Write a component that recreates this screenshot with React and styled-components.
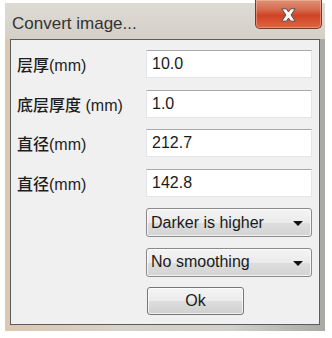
import React from 'react'
import styled, { createGlobalStyle } from 'styled-components'

const GlobalStyle = createGlobalStyle`
  html, body { margin: 0; padding: 0; background: #fff; }
  body { width: 332px; height: 338px; overflow: hidden; }
`

const fields = [
  { label: '层厚', gap: '', value: '10.0' },
  { label: '底层厚度', gap: ' ', value: '1.0' },
  { label: '直径', gap: '', value: '212.7' },
  { label: '直径', gap: '', value: '142.8' },
]

const selects = ['Darker is higher', 'No smoothing']

const App = () => {
  return (
    <>
      <GlobalStyle />
      <Window>
        <TitleBar>
          <Title>Convert image...</Title>
          <CloseButton>
            <svg width="15" height="14" viewBox="0 0 15 14">
              <path
                d="M0.8 0.8h4.6l2.1 3.1 2.1-3.1h4.6l-4.1 6.2 4.1 6.2H9.6L7.5 10.1 5.4 13.2H0.8l4.1-6.2z"
                fill="#f6f6f6"
                stroke="#5d4c48"
                strokeWidth="1"
                strokeLinejoin="round"
              />
            </svg>
          </CloseButton>
        </TitleBar>
        <Panel>
          {fields.map((f, i) => (
            <Row key={i}>
              <Label>
                <Cjk>{f.label}</Cjk>
                {f.gap}(mm)
              </Label>
              <TextBox>{f.value}</TextBox>
            </Row>
          ))}
          {selects.map((s) => (
            <Row key={s}>
              <span />
              <Combo>
                {s}
                <Arrow />
              </Combo>
            </Row>
          ))}
          <Row>
            <span />
            <OkButton>Ok</OkButton>
          </Row>
        </Panel>
      </Window>
    </>
  )
}

export default App

const Window = styled.div`
  margin-left: 5px;
  width: 320px;
  height: 331px;
  display: flex;
  flex-direction: column;
  background: linear-gradient(to right, #dcc7b2 0%, #d6d1c9 35%, #d2d0ca 70%, #a9aaa5 100%);
  font-family: "Liberation Sans", Arial, sans-serif;
`

const TitleBar = styled.div`
  height: 39px;
  display: flex;
  justify-content: space-between;
  align-items: flex-start;
  padding: 0 3px 0 7px;
  background: linear-gradient(to bottom, #ffffff 0px, #ffffff 3px, #dedbd5 3px, #d4d0c8 100%);
`

const Title = styled.div`
  font-size: 17px;
  color: #333;
  margin-top: 14px;
`

const CloseButton = styled.div`
  width: 67px;
  height: 29px;
  box-sizing: border-box;
  border: 1px solid #6e3a2c;
  border-top: none;
  border-radius: 0 0 5px 5px;
  background: linear-gradient(to bottom, #dc9478 0%, #d66a4c 35%, #cf4326 55%, #e0663f 100%);
  display: flex;
  align-items: center;
  justify-content: center;
  padding-top: 1px;
  box-shadow: inset 0 0 0 1px rgba(255, 200, 180, 0.45);
`

const Panel = styled.div`
  flex: 1;
  margin: 0 5px 6px 5px;
  border: 1px solid #5c5c5c;
  background: #f0f0f0;
  display: flex;
  flex-direction: column;
  gap: 11.5px;
  padding: 10px 7px 0 6px;
`

const Row = styled.div`
  display: grid;
  grid-template-columns: 1fr 166px;
  align-items: center;
  height: 28px;
`

const Label = styled.div`
  font-size: 16px;
  color: #1e1e1e;
  white-space: nowrap;
`

const Cjk = styled.span`
  font-family: "Noto Sans CJK SC", sans-serif;
  font-weight: 500;
  font-size: 16px;
`

const TextBox = styled.div`
  height: 28px;
  box-sizing: border-box;
  background: #fff;
  border: 1px solid #e2e5ea;
  border-top-color: #a6a9ae;
  font-size: 16px;
  color: #1a1a1a;
  padding: 0 5px;
  display: flex;
  align-items: center;
`

const Combo = styled.div`
  position: relative;
  height: 29px;
  box-sizing: border-box;
  border: 1px solid #8a8a8a;
  border-radius: 3px;
  background: linear-gradient(to bottom, #f4f4f4 0%, #ebebeb 50%, #dddddd 51%, #d4d4d4 100%);
  box-shadow: inset 0 0 0 1px rgba(255, 255, 255, 0.7);
  font-size: 16px;
  color: #1a1a1a;
  padding: 0 4px;
  display: flex;
  align-items: center;
`

const Arrow = styled.span`
  position: absolute;
  right: 8px;
  top: 12px;
  width: 0;
  height: 0;
  border-left: 5px solid transparent;
  border-right: 5px solid transparent;
  border-top: 5px solid #111;
`

const OkButton = styled.div`
  width: 97px;
  height: 28px;
  margin-left: 1px;
  box-sizing: border-box;
  border: 1px solid #777;
  border-radius: 3px;
  background: linear-gradient(to bottom, #f4f4f4 0%, #ebebeb 50%, #dddddd 51%, #d0d0d0 100%);
  box-shadow: inset 0 0 0 1px rgba(255, 255, 255, 0.7);
  font-size: 16px;
  color: #1a1a1a;
  display: flex;
  align-items: center;
  justify-content: center;
`
